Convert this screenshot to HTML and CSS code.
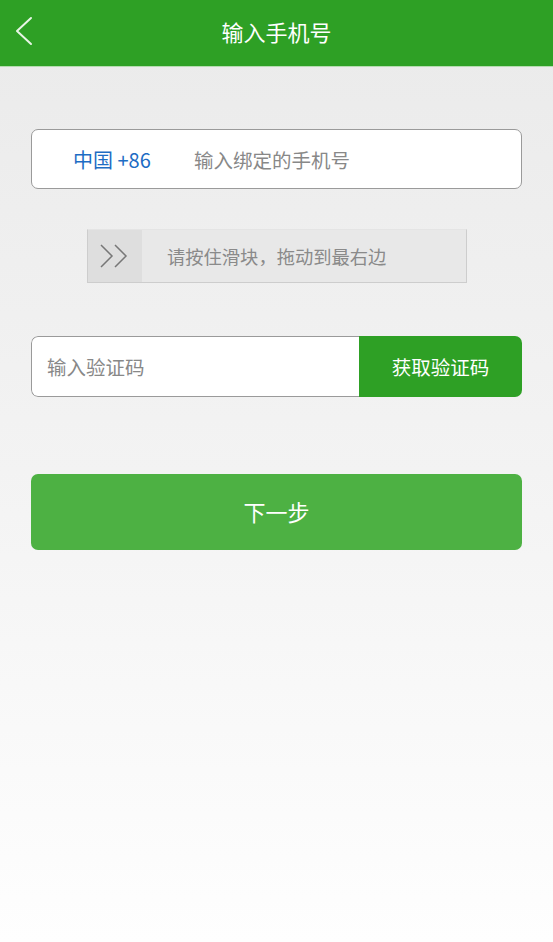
FILE: index.html
```html
<!DOCTYPE html>
<html lang="zh">
<head>
<meta charset="utf-8">
<title>输入手机号</title>
<link rel="stylesheet" href="styles.css">
</head>
<body>
<div class="page">
  <header class="topbar">
    <span class="back">
      <svg width="20" height="30" viewBox="0 0 20 30"><path d="M17 2 L3 15 L17 28" fill="none" stroke="#e8f5e6" stroke-width="2" stroke-linecap="round" stroke-linejoin="round"/></svg>
    </span>
    <h1 class="title">输入手机号</h1>
  </header>
  <main class="content">
    <div class="phone-box">
      <span class="country">中国 +86</span>
      <span class="placeholder">输入绑定的手机号</span>
    </div>
    <div class="slider">
      <div class="handle">
        <svg width="34" height="30" viewBox="0 0 34 30"><path d="M3 4 L14 15 L3 26 M17 4 L28 15 L17 26" fill="none" stroke="#777" stroke-width="1.5" stroke-linejoin="miter"/></svg>
      </div>
      <div class="slider-text">请按住滑块，拖动到最右边</div>
    </div>
    <div class="code-row">
      <span class="code-input">输入验证码</span>
      <span class="code-btn">获取验证码</span>
    </div>
    <div class="next-btn">下一步</div>
  </main>
</div>
</body>
</html>
```

FILE: styles.css
```css
* { box-sizing: border-box; }
html, body { margin: 0; padding: 0; }
body {
  font-family: "Noto Sans CJK SC", "Noto Sans", sans-serif;
  width: 553px;
  height: 942px;
  overflow: hidden;
}
.page {
  height: 942px;
  background: linear-gradient(to bottom, #eaeaea 0%, #f3f3f3 50%, #fefefe 100%);
}
.topbar {
  height: 67px;
  background: #2ea025;
  border-bottom: 1px solid #b5dcb0;
  display: flex;
  align-items: center;
  justify-content: center;
  position: relative;
}
.back {
  position: absolute;
  left: 14px;
  top: 16px;
  display: flex;
}
.title {
  margin: 0;
  font-size: 22px;
  font-weight: normal;
  color: #ffffff;
  margin-top: -4px;
}
.content {
  padding: 62px 31px 0 31px;
  display: flex;
  flex-direction: column;
}
.phone-box {
  height: 60px;
  background: #fff;
  border: 1.5px solid #9a9a9a;
  border-radius: 7px;
  display: flex;
  align-items: center;
  padding-left: 41px;
  font-size: 19.5px;
}
.country {
  color: #1d6cc4;
  width: 121px;
  font-size: 20px;
}
.placeholder {
  color: #888;
}
.slider {
  margin: 40px 55px 0 56px;
  height: 54px;
  display: flex;
  border: 1px solid #cdcdcd;
  border-top-color: #e4e4e4;
  background: #e8e8e8;
}
.handle {
  width: 54px;
  background: #dedede;
  display: flex;
  align-items: center;
  justify-content: center;
}
.slider-text {
  display: flex;
  align-items: center;
  padding-left: 25px;
  font-size: 18.3px;
  color: #8a8a8a;
}
.code-row {
  margin-top: 53px;
  height: 61px;
  display: flex;
  border-radius: 7px;
  overflow: hidden;
}
.code-input {
  flex: 1;
  background: #fff;
  border: 1.5px solid #9a9a9a;
  border-right: none;
  border-radius: 7px 0 0 7px;
  display: flex;
  align-items: center;
  padding-left: 15px;
  font-size: 19.5px;
  color: #888;
}
.code-btn {
  width: 163px;
  background: #2ea025;
  color: #fff;
  display: flex;
  align-items: center;
  justify-content: center;
  font-size: 19.5px;
}
.next-btn {
  margin-top: 77px;
  height: 76px;
  background: #4db143;
  border-radius: 7px;
  color: #fff;
  font-size: 22px;
  display: flex;
  align-items: center;
  justify-content: center;
  padding-bottom: 2px;
}
```
